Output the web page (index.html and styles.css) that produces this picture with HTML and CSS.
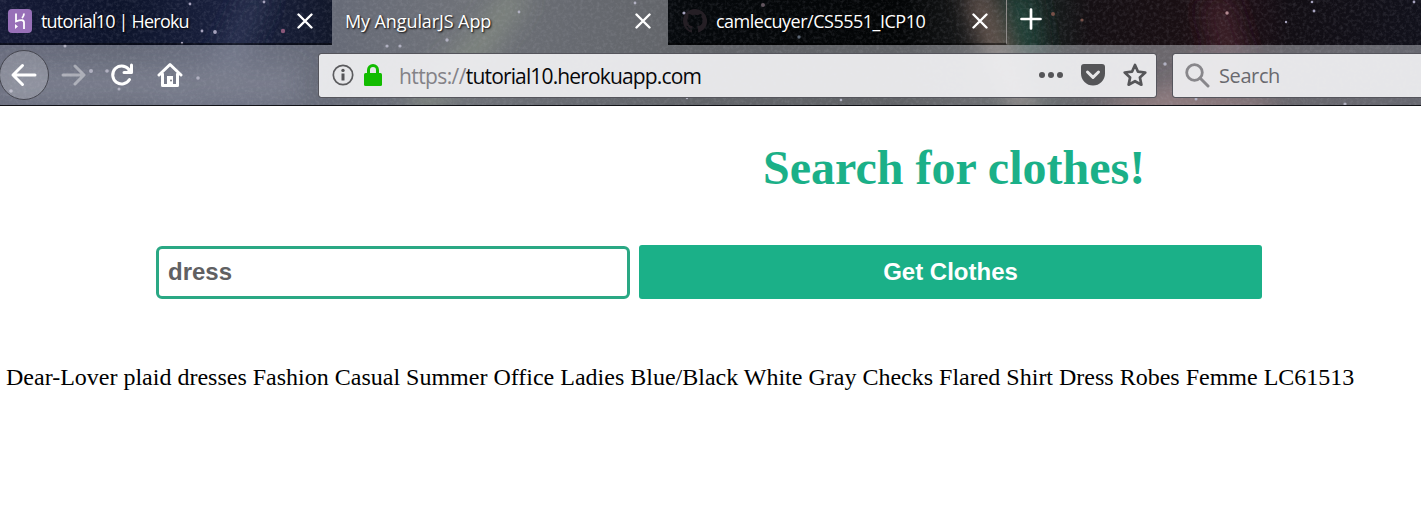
FILE: index.html
```
<!DOCTYPE html>
<html lang="en">
<head>
<meta charset="utf-8">
<title>My AngularJS App</title>
<link rel="stylesheet" href="styles.css">
</head>
<body>
<header class="chrome">
  <svg class="sky" width="1421" height="106" aria-hidden="true">
    <defs>
      <filter id="grain" x="0" y="0" width="100%" height="100%"><feTurbulence type="fractalNoise" baseFrequency=".3" numOctaves="3" seed="8"/><feColorMatrix values="0 0 0 0 .65  0 0 0 0 .65  0 0 0 0 .75  1.4 0 0 0 -.6"/></filter>
      <filter id="soft" filterUnits="userSpaceOnUse" x="-50" y="-60" width="1521" height="230"><feGaussianBlur stdDeviation="12"/></filter>
      <filter id="dot"><feGaussianBlur stdDeviation=".5"/></filter>
    </defs>
    <g filter="url(#soft)">
      <path d="M262 -10L225 65L170 110" stroke="#343c5c" stroke-width="14" fill="none"/>
      <path d="M0 84H300" stroke="#353b52" stroke-width="34"/>
      <path d="M520-10L480 45L415 110" stroke="#414b38" stroke-width="26" fill="none"/>
      <path d="M1015-10L1028 60" stroke="#24443a" stroke-width="30" fill="none"/>
      <path d="M975-10L998 60L1030 115" stroke="#967a70" stroke-width="15" fill="none"/>
      <path d="M1215 0L1235 65L1140 110" stroke="#40202a" stroke-width="24" fill="none"/>
      <path d="M1110 108H1270" stroke="#87504b" stroke-width="14"/>
    </g>
    <rect width="1421" height="106" filter="url(#grain)" opacity=".2"/>
    <g fill="#a5a2bc" filter="url(#dot)">
      <circle cx="190" cy="4" r="1.4"/><circle cx="182" cy="43" r="1.2"/><circle cx="202" cy="31" r="1.4"/><circle cx="215" cy="32" r="1.9"/><circle cx="264" cy="2" r="1.4"/><circle cx="283" cy="31" r="2.2" fill="#8b5879"/><circle cx="96" cy="13" r="1.2"/><circle cx="137" cy="27" r="1.2"/><circle cx="65" cy="46" r="1.5"/><circle cx="91" cy="71" r="2"/><circle cx="107" cy="71" r="1.8"/><circle cx="198" cy="78" r="1.8"/><circle cx="11" cy="91" r="1.8"/><circle cx="119" cy="89" r="1.5"/><circle cx="387" cy="46" r="1.6"/><circle cx="400" cy="46" r="1.6"/><circle cx="447" cy="40" r="1.7"/><circle cx="519" cy="12" r="1.4"/><circle cx="635" cy="3" r="1.4"/><circle cx="684" cy="13" r="1.6"/><circle cx="763" cy="5" r="2" fill="#62555f"/><circle cx="799" cy="37" r="1.7" fill="#5d6874"/><circle cx="687" cy="98" r="1.2"/><circle cx="841" cy="100" r="1.3"/><circle cx="411" cy="96" r="1.6"/><circle cx="1053" cy="14" r="2" fill="#775149"/><circle cx="1082" cy="20" r="1.6" fill="#775149"/><circle cx="1227" cy="13" r="1.7" fill="#b48b92"/><circle cx="1286" cy="22" r="1.2"/><circle cx="1314" cy="11" r="1.4"/><circle cx="1312" cy="2" r="1.3"/><circle cx="1414" cy="2" r="1.4"/><circle cx="1165" cy="64" r="1.7"/><circle cx="1196" cy="99" r="1.5"/><circle cx="1345" cy="104" r="1.6"/>
    </g>
  </svg>
  <nav class="tabs">
    <div class="tab first">
      <svg class="heroku" width="24" height="24" viewBox="0 0 24 24"><rect width="24" height="24" rx="4" fill="#9870b8"/><path d="M8 4.5V12.5Q16 9.5 16 13.5V20M16 4.5Q16 7 14 9" fill="none" stroke="#fff" stroke-width="1.8"/><path d="M7 15L10 17.5L7 20Z" fill="#fff"/></svg>
      <span class="label t1">tutorial10 | Heroku</span>
      <svg class="close" width="16" height="16"><path d="M1.5 1.5L14.5 14.5M14.5 1.5L1.5 14.5"/></svg>
    </div>
    <div class="tab active">
      <span class="label t2">My AngularJS App</span>
      <svg class="close" width="16" height="16"><path d="M1.5 1.5L14.5 14.5M14.5 1.5L1.5 14.5"/></svg>
    </div>
    <div class="tab third">
      <svg class="github" width="24" height="24" viewBox="0 0 16 16"><path fill="#251f25" d="M8 0C3.58 0 0 3.58 0 8c0 3.54 2.29 6.53 5.47 7.59.4.07.55-.17.55-.38v-1.49c-2.01.37-2.53-.49-2.69-.94-.09-.23-.48-.94-.82-1.13-.28-.15-.68-.52-.01-.53.63-.01 1.08.58 1.23.82.72 1.21 1.87.87 2.33.66.07-.52.28-.87.51-1.07-1.78-.2-3.64-.89-3.64-3.95 0-.87.31-1.59.82-2.15-.08-.2-.36-1.02.08-2.12 0 0 .67-.21 2.2.82a7.6 7.6 0 0 1 4 0c1.53-1.04 2.2-.82 2.2-.82.44 1.1.16 1.92.08 2.12.51.56.82 1.27.82 2.15 0 3.07-1.87 3.75-3.65 3.95.29.25.54.73.54 1.48v2.2c0 .21.15.46.55.38A8 8 0 0 0 8 0Z"/></svg>
      <span class="label t3">camlecuyer/CS5551_ICP10</span>
      <svg class="close" width="16" height="16"><path d="M1.5 1.5L14.5 14.5M14.5 1.5L1.5 14.5"/></svg>
    </div>
    <div class="newtab"><svg width="22" height="22"><path d="M11 1.5V20.5M1.5 11H20.5" stroke="#fff" stroke-width="2.7" stroke-linecap="round"/></svg></div>
  </nav>
  <div class="toolbar">
    <div class="back"><svg width="28" height="24"><path d="M25 12H3M12.5 2.5L3 12L12.5 21.5" class="whiteline"/></svg></div>
    <svg class="forward" width="26" height="24"><path d="M2 12H23M14 3L23 12L14 21" class="whiteline"/></svg>
    <svg class="reload" width="26" height="26"><path d="M20.5 17.5A9 9 0 1 1 19.5 7" class="whiteline"/><path d="M22.5 3V10.5H15" class="whiteline"/><path d="M22 5V10H17Z" fill="#fff"/></svg>
    <svg class="home" width="26" height="26"><path d="M2 13L13 2.5L24 13M5.5 12V23.5H20.5V12" class="whiteline"/><path d="M10 14H16V22H10Z" fill="#fff"/><circle cx="14" cy="18.5" r="1" fill="#777983"/></svg>
    <div class="field address">
      <svg class="info" width="22" height="22"><circle cx="11" cy="11" r="9.7" fill="none" stroke="#5b5b5e" stroke-width="1.7"/><path d="M11 9.5V16.5" stroke="#555558" stroke-width="3"/><circle cx="11" cy="6.4" r="1.7" fill="#555558"/></svg>
      <svg class="lock" width="18" height="22"><path d="M4.5 10V6A4.5 4.5 0 0 1 13.5 6V10" fill="none" stroke="#12bc00" stroke-width="3"/><rect y="9" width="18" height="13" rx="1.5" fill="#12bc00"/></svg>
      <span class="url"><span class="scheme">https://</span>tutorial10.herokuapp.com</span>
      <svg class="more" width="24" height="8" fill="#555558"><circle cx="3" cy="4" r="3"/><circle cx="12" cy="4" r="3"/><circle cx="21" cy="4" r="3"/></svg>
      <svg class="pocket" width="24" height="22"><path d="M3 0H21Q24 0 24 3V9.5A12 12 0 0 1 0 9.5V3Q0 0 3 0Z" fill="#555558"/><path d="M6.5 8L12 13.3L17.5 8" stroke="#e7e6e8" stroke-width="3" stroke-linecap="round" stroke-linejoin="round" fill="none"/></svg>
      <svg class="star" width="26" height="26"><path d="M13 3L16 9.7L23.3 10.5L17.9 15.5L19.4 22.7L13 19.2L6.6 22.7L8.1 15.5L2.7 10.5L10 9.7Z" fill="none" stroke="#555558" stroke-width="2.7" stroke-linejoin="round"/></svg>
    </div>
    <div class="field search">
      <svg width="25" height="25"><circle cx="9.5" cy="9.5" r="7.8" fill="none" stroke="#88878b" stroke-width="2.8"/><path d="M15 15L23 23" stroke="#88878b" stroke-width="3" stroke-linecap="round"/></svg>
      <span class="search-label">Search</span>
    </div>
  </div>
</header>
<main>
  <h1>Search for clothes!</h1>
  <form class="query">
    <input class="term" type="text" value="dress" aria-label="Search term">
    <button class="submit" type="button">Get Clothes</button>
  </form>
  <p class="result">Dear-Lover plaid dresses Fashion Casual Summer Office Ladies Blue/Black White Gray Checks Flared Shirt Dress Robes Femme LC61513</p>
</main>
</body>
</html>
```
FILE: styles.css
```
* { box-sizing: border-box; }
body { margin: 0; background: #fff; overflow: hidden; font-family: "Liberation Serif", serif; }
svg { display: block; flex: none; }
.chrome {
  position: relative; height: 106px; overflow: hidden; border-bottom: 1px solid #111217;
  font-family: "Open Sans", "Noto Sans", sans-serif;
  background: linear-gradient(90deg, #151a36 0, #0d142b 120px, #1b2240 235px, #101628 340px, #20242b 460px, #11151c 570px, #05080b 690px, #030506 900px, #18191a 970px, #172421 1030px, #150f13 1090px, #190f13 1180px, #241017 1220px, #120e14 1290px, #11111b 1421px);
}
.sky { position: absolute; left: 0; top: 0; }
.tabs { position: relative; display: flex; height: 45px; }
.tab { display: flex; align-items: center; height: 45px; padding-bottom: 1px; border-bottom: 2px solid rgba(0,0,0,.45); color: #fff; }
.first { width: 332px; padding-left: 8px; padding-right: 19px; }
.active { width: 336px; padding-left: 13px; padding-right: 17px; background: rgba(190,192,198,.5); border: 0; padding-bottom: 3px; }
.third { width: 339px; padding-left: 15px; padding-right: 18px; border-right: 1px solid #8e8b89; }
.label { white-space: nowrap; font-size: 18px; line-height: 24px; text-shadow: 1px 1px 2px #000; }
.heroku { margin-right: 9px; }
.github { margin-right: 9px; }
.t1 { letter-spacing: -.8px; }
.t2 { letter-spacing: -.1px; }
.t3 { letter-spacing: -.5px; }
.close { margin-left: auto; fill: none; stroke: #fff; stroke-width: 2.4; stroke-linecap: round; }
.newtab { padding: 8px 0 0 13px; }
.toolbar { position: relative; display: flex; align-items: center; height: 60px; background: rgba(190,192,198,.5); }
.toolbar > * { flex: none; }
.back { display: flex; align-items: center; justify-content: center; width: 50px; height: 50px; margin-left: -1px; border: 1px solid #45464f; border-radius: 50%; background: rgba(255,255,255,.18); }
.whiteline { fill: none; stroke: #fff; stroke-width: 3; stroke-linecap: round; stroke-linejoin: round; }
.forward { margin-left: 12px; opacity: .4; }
.reload { margin-left: 22px; }
.home { margin-left: 22px; }
.field { display: flex; align-items: center; height: 45px; border: 1px solid #55555c; border-radius: 3px; background: rgba(240,240,242,.93); background-clip: padding-box; }
.address { width: 839px; margin-left: 135px; padding: 0 8px 0 13px; }
.lock { margin-left: 10px; }
.url { margin-left: 17px; padding-top: 1px; white-space: nowrap; font-size: 21px; line-height: 30px; letter-spacing: -.85px; color: #08080a; }
.scheme { color: #838287; letter-spacing: -.6px; }
.more { margin-left: auto; }
.pocket { margin-left: 18px; }
.star { margin-left: 17px; }
.search { width: 264px; margin-left: 15px; padding-left: 12px; }
.search-label { margin-left: 9px; padding-top: 1px; font-size: 20px; line-height: 30px; letter-spacing: -.4px; color: #69696e; }
h1 { margin: 34px 0 0; padding-left: 763px; font-size: 48px; line-height: 55px; color: #1bb088; white-space: nowrap; }
.query { display: flex; align-items: flex-end; gap: 9px; margin: 50px 0 0; padding-left: 156px; }
.term, .submit { font: bold 24px/28px "Liberation Sans", Arial, sans-serif; margin: 0; border-radius: 3px; }
.term { width: 474px; height: 53px; padding: 0 9px 2px; border: 3px solid #2aa884; border-radius: 6px; color: #606062; background: #fff; outline: 0; }
.submit { width: 623px; height: 54px; padding: 0; border: 0; color: #fff; background: #1bb088; }
.result { margin: 64px 0 0; padding-left: 6px; font-size: 24px; line-height: 28px; color: #000; white-space: nowrap; }
```
